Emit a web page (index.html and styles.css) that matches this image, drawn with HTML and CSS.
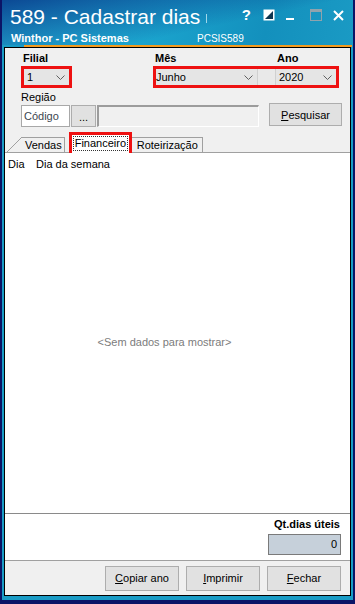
FILE: index.html
```html
<!DOCTYPE html>
<html lang="pt-BR">
<head>
    <meta charset="UTF-8">
    <meta name="viewport" content="width=device-width, initial-scale=1.0">
    <title>589 - Cadastrar dias</title>
    <link rel="stylesheet" href="styles.css">
</head>
<body>
    <div class="window">
        <div class="frame">
            <header class="titlebar">
                <div class="title-row">
                    <h1 class="title">589 - Cadastrar dias</h1>
                    <span class="caret"></span>
                    <div class="controls">
                        <span class="ctl help">?</span>
                        <svg class="ctl" width="12" height="12" viewBox="0 0 12 12"><rect x="0.5" y="0.5" width="11" height="11" fill="#fff"/><polygon points="10,2 10,10 2,10" fill="#0e3550"/></svg>
                        <svg class="ctl" width="8" height="12" viewBox="0 0 8 12"><rect x="0" y="9" width="8" height="2" fill="#fff"/></svg>
                        <svg class="ctl" width="12" height="12" viewBox="0 0 12 12"><rect x="0.5" y="0.5" width="11" height="11" fill="none" stroke="#8fa3ad"/><rect x="0" y="0" width="12" height="3" fill="#8fa3ad"/></svg>
                        <svg class="ctl" width="11" height="11" viewBox="0 0 11 11"><path d="M1 1 L10 10 M10 1 L1 10" stroke="#fff" stroke-width="2"/></svg>
                    </div>
                </div>
                <div class="sub-row">
                    <span class="company">Winthor - PC Sistemas</span>
                    <span class="code">PCSIS589</span>
                </div>
            </header>
            <div class="accent"></div>

            <main class="content">
                <div class="filters">
                    <div class="label-row">
                        <span class="lbl lbl-filial">Filial</span>
                        <span class="lbl lbl-mes">Mês</span>
                        <span class="lbl lbl-ano">Ano</span>
                    </div>
                    <div class="select-row">
                        <div class="mark mark-filial">
                            <div class="combo combo-filial">1<svg class="chev" width="9" height="5" viewBox="0 0 9 5"><path d="M0.5 0.5 L4.5 4.5 L8.5 0.5" fill="none" stroke="#606060"/></svg></div>
                        </div>
                        <div class="mark mark-periodo">
                            <div class="combo combo-mes">Junho<svg class="chev" width="9" height="5" viewBox="0 0 9 5"><path d="M0.5 0.5 L4.5 4.5 L8.5 0.5" fill="none" stroke="#606060"/></svg></div>
                            <div class="combo-gap"></div>
                            <div class="combo combo-ano">2020<svg class="chev" width="9" height="5" viewBox="0 0 9 5"><path d="M0.5 0.5 L4.5 4.5 L8.5 0.5" fill="none" stroke="#606060"/></svg></div>
                        </div>
                    </div>
                    <div class="lbl-regiao">Região</div>
                    <div class="regiao-row">
                        <div class="field field-codigo">Código</div>
                        <button class="btn btn-dots">...</button>
                        <div class="field field-desc"></div>
                        <button class="btn btn-search"><u>P</u>esquisar</button>
                    </div>
                </div>

                <div class="tabs">
                    <div class="tab tab-vendas">Vendas</div>
                    <div class="tab tab-active"><span class="focus">Financeiro</span></div>
                    <div class="tab tab-rot">Roteirização</div>
                </div>

                <div class="panel">
                    <div class="grid-head">
                        <span class="col-dia">Dia</span>
                        <span>Dia da semana</span>
                    </div>
                    <div class="empty">&lt;Sem dados para mostrar&gt;</div>
                </div>

                <div class="totals">
                    <div class="totals-lbl">Qt.dias úteis</div>
                    <div class="totals-val">0</div>
                </div>

                <footer class="actions">
                    <button class="btn btn-action"><u>C</u>opiar ano</button>
                    <button class="btn btn-action"><u>I</u>mprimir</button>
                    <button class="btn btn-action"><u>F</u>echar</button>
                </footer>
            </main>
        </div>
    </div>
</body>
</html>
```

FILE: styles.css
```css
* {
    margin: 0;
    padding: 0;
    box-sizing: border-box;
}

body {
    font-family: "Liberation Sans", Arial, sans-serif;
    font-size: 11px;
    color: #000;
    background-color: #0b1466;
}

.window {
    width: 355px;
    height: 604px;
    background-color: #0b1466;
    padding: 0 3px 4px 2px;
    display: flex;
}

.frame {
    flex: 1;
    display: flex;
    flex-direction: column;
    background-color: #1a9cc6;
    padding: 0 2px 4px 2px;
}

/* title bar */
.titlebar {
    height: 45px;
    margin: 0 -2px;
    background:
        linear-gradient(168deg, rgba(8, 60, 140, 0.9) 0%, rgba(8, 60, 140, 0.4) 35%, rgba(8, 60, 140, 0) 60%),
        linear-gradient(100deg, #27b8dc 0%, #1aa2cc 45%, #1390bd 75%, #1a9ac4 100%);
    color: #fff;
    padding: 0 0 0 8px;
}

.title-row {
    display: flex;
    align-items: center;
    height: 31px;
}

.title {
    font-weight: normal;
    font-size: 21px;
    margin-top: 2px;
}

.caret {
    width: 1px;
    height: 9px;
    background-color: #9fd7ea;
    margin: 5px 0 0 6px;
}

.controls {
    margin-left: auto;
    display: flex;
    align-items: center;
    padding-right: 9px;
    margin-top: -1px;
}

.ctl {
    display: block;
}

.help {
    font-weight: bold;
    font-size: 15px;
    margin-right: 12px;
    margin-top: -2px;
}

.controls svg:nth-child(2) { margin-right: 11px; }
.controls svg:nth-child(3) { margin-right: 16px; }
.controls svg:nth-child(4) { margin-right: 11px; }

.sub-row {
    display: flex;
    align-items: center;
    height: 12px;
    margin-top: 1px;
}

.company {
    font-weight: bold;
    font-size: 11px;
    width: 187px;
    padding-left: 1px;
}

.code {
    font-size: 10px;
}

.accent {
    height: 2px;
    background-color: #f39a1e;
    margin: 0 -1px 0 20px;
}

/* main */
.content {
    flex: 1;
    display: flex;
    flex-direction: column;
    border: 1px solid #000;
    background-color: #f0f0f0;
}

.filters {
    padding: 3px 8px 0 16px;
}

.label-row {
    display: flex;
    height: 14px;
    align-items: center;
}

.lbl {
    font-weight: bold;
}

.lbl-filial { margin-left: 2px; width: 132px; }
.lbl-mes { width: 122px; }

.select-row {
    display: flex;
    margin-top: 1px;
    height: 22px;
}

.mark {
    border: 3px solid #ee1111;
    display: flex;
}

.mark-filial {
    width: 51px;
}

.mark-periodo {
    width: 186px;
    margin-left: 81px;
    background-color: #e9e9e9;
}

.combo {
    display: flex;
    align-items: center;
    justify-content: space-between;
    background-color: #e5e5e5;
    padding: 0 4px 0 3px;
    height: 16px;
}

.combo-filial {
    width: 100%;
}

.combo-mes {
    width: 102px;
    border-right: 1px solid #d0d0d0;
    padding-left: 0;
}

.combo-gap {
    width: 17px;
}

.combo-ano {
    flex: 1;
    border-left: 1px solid #d0d0d0;
    padding-left: 3px;
}

.chev {
    display: block;
}

.lbl-regiao {
    height: 13px;
    margin-top: 3px;
    line-height: 13px;
}

.regiao-row {
    display: flex;
    align-items: flex-start;
    margin-top: 1px;
    height: 23px;
}

.field {
    height: 22px;
    background-color: #fff;
    border: 1px solid #a8a8a8;
    display: flex;
    align-items: center;
    padding-left: 2px;
    color: #3c4650;
}

.field-codigo {
    width: 49px;
}

.btn {
    font-family: "Liberation Sans", Arial, sans-serif;
    font-size: 11px;
    background-color: #e1e1e1;
    border: 1px solid #adadad;
    color: #000;
}

.btn-dots {
    width: 25px;
    height: 22px;
    margin-left: 1px;
    padding-top: 2px;
}

.field-desc {
    width: 162px;
    margin-left: 1px;
    background-color: #f0f0f0;
    border-top: 2px solid #9c9c9c;
    border-left: 2px solid #9c9c9c;
    border-right: 1px solid #fff;
    border-bottom: 1px solid #fff;
}

.btn-search {
    width: 73px;
    height: 23px;
    margin-left: 10px;
    margin-top: -2px;
}

/* tabs */
.tabs {
    display: flex;
    align-items: flex-end;
    height: 20px;
    margin-top: 4px;
    padding-left: 17px;
    position: relative;
    z-index: 1;
}

.tab {
    height: 15px;
    border: 1px solid #a0a0a0;
    border-bottom: none;
    padding: 0 4px;
    line-height: 14px;
    background-color: #f0f0f0;
}

.tab-vendas {
    position: relative;
    border-left: none;
    padding: 0 2px 0 3px;
}

.tab-vendas::before {
    content: '';
    position: absolute;
    left: -15px;
    top: -1px;
    width: 15px;
    height: 15px;
    background: linear-gradient(to bottom right, transparent calc(50% - 0.6px), #a0a0a0 50%, transparent calc(50% + 0.6px));
}

.tab-active {
    height: 21px;
    width: 63px;
    margin: 0 0 -1px 4px;
    background-color: #fff;
    border: 3px solid #ee1111;
    border-bottom: none;
    padding: 1px 1px 0 1px;
    line-height: 13px;
}

.focus {
    display: block;
    border: 1px dotted #333;
    padding: 0 0 0 1px;
    height: 15px;
}

.tab-rot {
    width: 71px;
    border-left: none;
    padding: 0 0 0 5px;
}

/* grid */
.panel {
    flex: 1;
    background-color: #fff;
    border-top: 1px solid #a0a0a0;
    border-bottom: 1px solid #8a8a8a;
    display: flex;
    flex-direction: column;
}

.grid-head {
    display: flex;
    height: 20px;
    align-items: center;
    padding-left: 3px;
    padding-top: 1px;
}

.col-dia {
    width: 28px;
}

.empty {
    flex: 1;
    display: flex;
    align-items: center;
    justify-content: center;
    color: #7c7c7c;
    padding: 0 26px 2px 0;
}

.totals {
    height: 46px;
    background-color: #fff;
    display: flex;
    flex-direction: column;
    align-items: flex-end;
    padding: 4px 9px 0 0;
}

.totals-lbl {
    font-weight: bold;
    height: 15px;
    line-height: 13px;
    padding-right: 1px;
}

.totals-val {
    width: 73px;
    height: 21px;
    margin-top: 1px;
    border: 1px solid #7a7a7a;
    background-color: #c6d0da;
    text-align: right;
    padding: 3px 3px 0 0;
}

.actions {
    height: 35px;
    border-top: 1px solid #a0a0a0;
    display: flex;
    justify-content: flex-end;
    align-items: center;
    gap: 7px;
    padding: 0 9px 0 0;
}

.btn-action {
    width: 74px;
    height: 25px;
}
```
